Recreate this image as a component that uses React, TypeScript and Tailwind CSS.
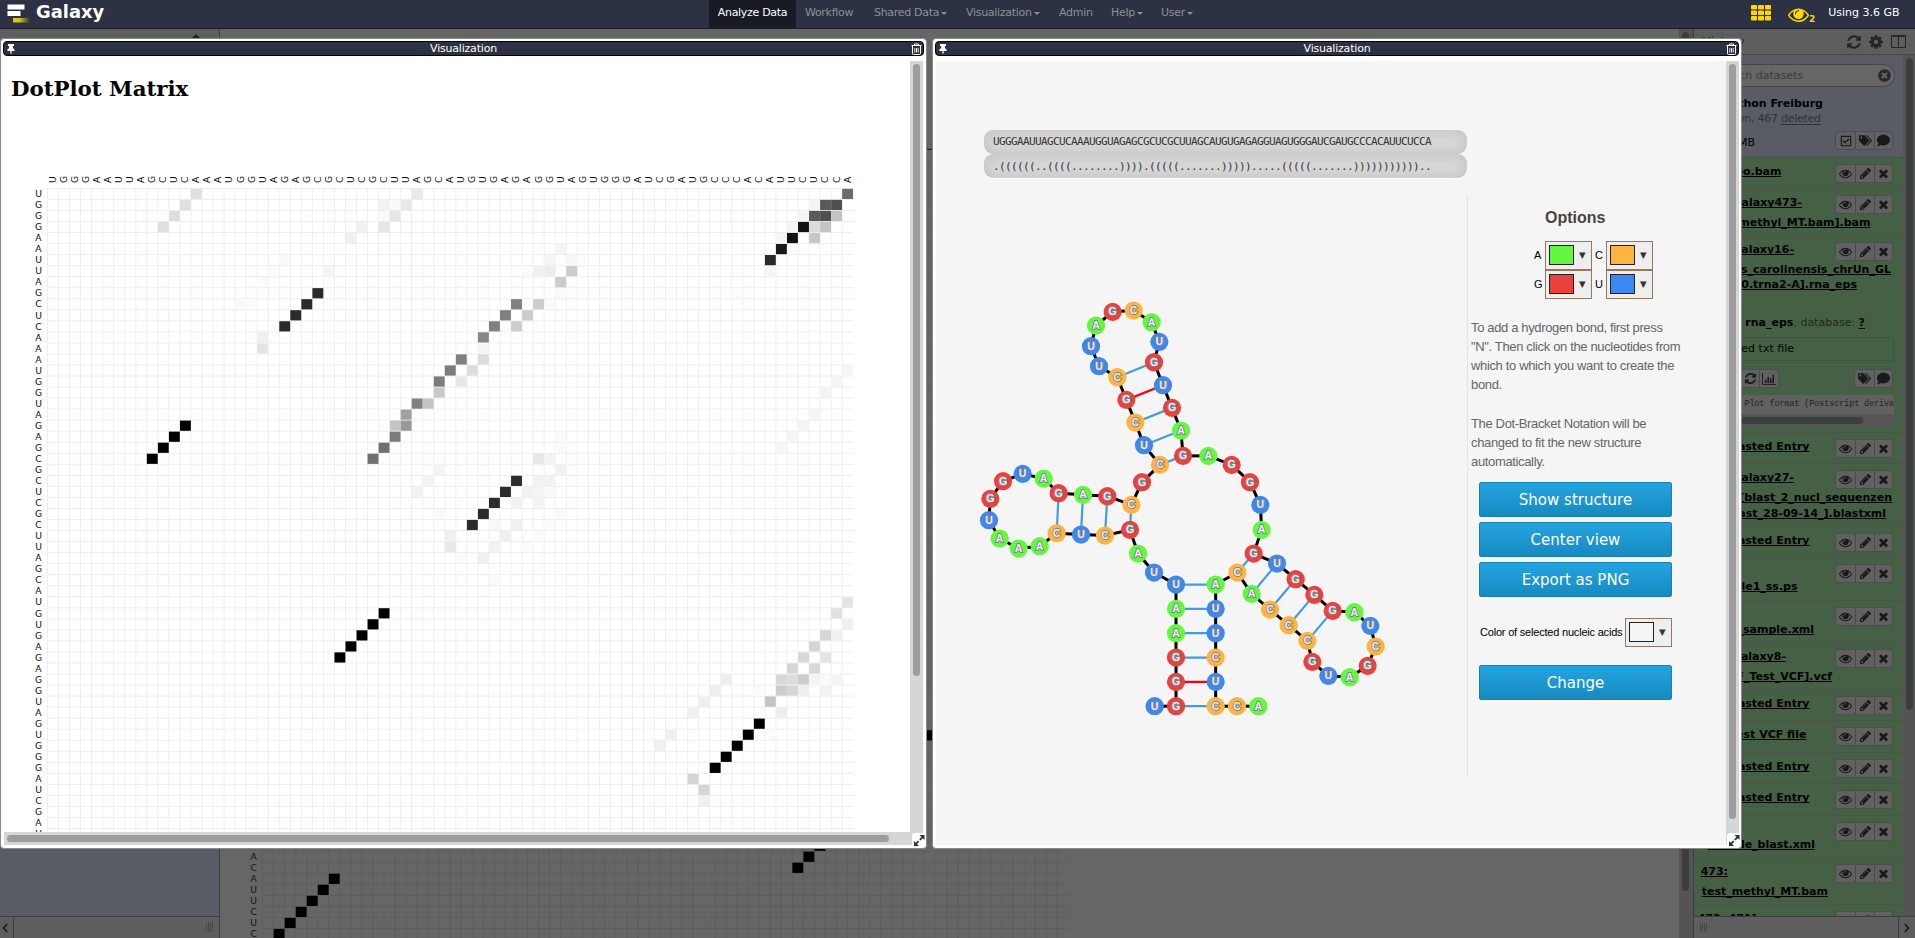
import React from "react";
import { FaTags, FaComment, FaRegCheckSquare, FaThumbtack, FaTimesCircle, FaChevronLeft, FaChevronRight } from "react-icons/fa";

const SEQ = "UGGGAAUUAGCUCAAAUGGUAGAGCGCUCGCUUAGCAUGUGAGAGGUAGUGGGAUCGAUGCCCACAUUCUCCA";
const DOTS = ".((((((..((((........)))).(((((.......))))).....(((((.......)))))))))))..";
const STEP = 11.037;

/* column, row, grey level */
const CELLS = `13 0 e0,33 0 ea,12 1 e0,30 1 f2,31 1 fa,32 1 e9,11 2 df,31 2 e6,30 2 fa,10 2 fc,10 3 df,30 3 e6,28 3 f1,27 4 f0,
21 6 fa,25 7 f5,20 7 fb,19 8 fb,24 9 2a,23 10 2a,17 10 fa,18 10 fb,22 11 2a,21 12 2a,19 13 f0,19 14 e4,39 13 86,37 15 80,36 16 7c,38 16 dc,
35 17 7c,37 17 e8,35 18 c8,33 19 80,34 19 c4,32 20 a0,31 21 c4,32 21 98,30 21 fc,12 21 00,31 22 7c,11 22 00,30 23 70,10 23 00,29 24 70,9 24 00,
35 25 f4,34 26 f3,33 27 f3,35 29 fa,39 29 2d,38 30 2d,36 31 f0,36 32 e8,37 33 fb,39 33 f0,
30 38 00,29 39 00,28 40 00,27 41 00,26 42 00,72 0 6c,69 1 f5,70 1 5a,71 1 50,68 2 f5,69 2 5a,70 2 50,71 2 c4,67 3 f5,68 3 12,69 3 dc,70 3 c4,
66 4 f5,67 4 12,69 4 c8,66 5 18,46 5 f4,67 5 fc,65 6 2a,45 6 f5,47 6 f8,48 6 fb,65 7 f5,44 7 f0,45 7 ed,47 7 cc,43 7 fb,46 8 cc,46 9 fb,62 9 fb,
42 10 80,44 10 cc,45 10 fa,41 11 80,43 11 cc,40 12 80,42 12 cc,39 14 f4,39 15 dc,72 16 f5,71 17 f4,70 18 f4,69 20 f5,68 21 f5,67 22 f6,66 23 f6,
46 22 fa,46 23 fa,44 24 e8,45 24 f2,46 25 f2,42 26 2d,44 26 f2,45 26 f2,41 27 2d,43 27 f2,44 27 f5,45 27 fa,40 28 2d,42 28 f3,44 28 f4,46 29 fa,
42 30 f0,40 30 f8,45 30 fb,41 31 f0,44 31 fc,40 32 f2,43 32 fb,40 35 fa,72 37 e4,71 38 e0,72 39 f0,70 40 d6,71 40 f0,69 41 d6,68 42 d8,70 42 e4,
67 43 d6,69 43 d8,61 44 ee,66 44 d8,67 44 dc,68 44 cc,69 44 f4,70 44 f9,71 44 f4,60 45 ee,66 45 cc,67 45 d6,68 45 ee,70 45 f2,64 45 fb,59 46 ee,65 46 c4,
58 47 f0,66 47 ee,64 48 00,56 49 f0,63 49 00,65 49 fb,55 50 f0,62 50 00,61 51 00,60 52 00,58 53 d6,59 54 d6,59 55 f0`
  .split(",")
  .map((s) => s.trim().split(" "))
  .map(([c, r, g]) => ({ c: +c, r: +r, fill: `#${g}${g}${g}` }));

const SHADOW_CELLS = [
  [60, 52], [50, 62], [49, 63], [48, 64], [6, 65], [5, 66], [4, 67], [3, 68], [2, 69], [1, 70],
].map(([c, r]) => ({ c, r, fill: "#000" }));

type Cell = { c: number; r: number; fill: string };

/* `rows` is how many row labels are drawn before the plot runs out of view. */
function DotPlot({ ox, oy, rows, cells, line, ink, viewBox, className }: {
  ox: number; oy: number; rows: number; cells: Cell[]; line: string; ink: string; viewBox: string; className: string;
}) {
  const end = STEP * 73;
  const idx = Array.from({ length: 73 }, (_, i) => i);
  return (
    <svg viewBox={viewBox} className={className}>
      <g stroke={line} strokeWidth="1">
        {idx.map((i) => (
          <g key={i}>
            <line x1={ox + i * STEP} x2={ox + i * STEP} y1={oy} y2={oy + end} />
            <line x1={ox} x2={ox + end} y1={oy + i * STEP} y2={oy + i * STEP} />
          </g>
        ))}
      </g>
      {cells.map((k, i) => (
        <rect key={i} x={ox + k.c * STEP} y={oy + k.r * STEP + 0.4} width={10.9} height={10.2} fill={k.fill} />
      ))}
      <g fill={ink} fontFamily="DejaVu Sans" fontSize="9.2">
        {idx.slice(0, rows).map((i) => (
          <text key={i} x={ox - 9} y={oy + i * STEP + 8.7} textAnchor="middle">{SEQ[i]}</text>
        ))}
        {idx.map((i) => (
          <text key={i} transform={`translate(${ox + i * STEP + 8.4} ${oy - 5.4}) rotate(-90)`}>{SEQ[i]}</text>
        ))}
      </g>
    </svg>
  );
}

const NODES = `554 1248,618 1248,618 1175,618 1102,618 1029,618 956,618 883,552 847,504 790,480 719,405 736,333 733,260 729,209 768,146 775,89 745,57 690,61 626,99 573,158 551,221 565,266 609,339 614,412 618,484 644,516 576,570 524,522 465,496 397,469 329,442 261,387 228,363 168,378 106,428 65,491 61,545 96,568 155,552 216,579 285,606 353,633 421,639 497,715 497,785 524,840 576,871 644,875 719,851 790,921 820,977 867,1033 914,1088 962,1153 966,1201 1007,1217 1069,1193 1127,1139 1161,1075 1157,1027 1115,1012 1052,956 1005,900 958,845 911,802 847,737 883,737 956,737 1029,737 1102,737 1175,737 1248,801 1248,865 1248`
  .split(",")
  .map((s) => s.split(" ").map(Number))
  .map(([x, y]) => [970 + x / 3, 290.2 + y / 3]);

const BONDS = [
  [2, 71], [3, 70], [4, 69], [5, 68], [6, 67], [7, 66], [10, 25], [11, 24], [12, 23], [13, 22],
  [27, 43], [28, 42], [29, 41], [30, 40], [31, 39], [49, 65], [50, 64], [51, 63], [52, 62], [53, 61],
];
const BASE: Record<string, string> = { A: "#64f73f", C: "#ffb340", G: "#eb413c", U: "#3c88ee" };

function Structure() {
  return (
    <svg viewBox="936 178 531 620" className="block h-[620px] w-[531px]">
      {BONDS.map(([a, b]) => {
        const p = NODES[a - 1];
        const q = NODES[b - 1];
        const wobble = (a === 3 && b === 70) || (a === 30 && b === 40);
        return <line key={a} x1={p[0]} y1={p[1]} x2={q[0]} y2={q[1]} stroke={wobble ? "#f8000c" : "#459cdb"} strokeWidth="2.2" />;
      })}
      {NODES.slice(1).map((q, i) => (
        <line key={i} x1={NODES[i][0]} y1={NODES[i][1]} x2={q[0]} y2={q[1]} stroke="#000" strokeWidth="3" />
      ))}
      {NODES.map(([x, y], i) => (
        <g key={i}>
          <circle cx={x} cy={y} r="9.1" fill={BASE[SEQ[i]]} />
          <text x={x} y={y + 3.3} textAnchor="middle" fontFamily="Liberation Sans" fontWeight="bold" fontSize="10.5" fill="#ececf2" stroke="#7d8290" strokeWidth="1.9" paintOrder="stroke">
            {SEQ[i]}
          </text>
        </g>
      ))}
    </svg>
  );
}

const P = {
  eye: "M1664 960q-152-236-381-353 61 104 61 225 0 185-131.5 316.5t-316.5 131.5-316.5-131.5-131.5-316.5q0-121 61-225-229 117-381 353 133 205 333.5 326.5t434.5 121.5 434.5-121.5 333.5-326.5zm-720-384q0-20-14-34t-34-14q-125 0-214.5 89.5t-89.5 214.5q0 20 14 34t34 14 34-14 14-34q0-86 61-147t147-61q20 0 34-14t14-34zm848 384q0 34-20 69-140 230-376.5 368.5t-499.5 138.5-499.5-139-376.5-368q-20-35-20-69t20-69q140-229 376.5-368t499.5-139 499.5 139 376.5 368q20 35 20 69z",
  pencil: "M491 1536l91-91-235-235-91 91v107h128v128h107zm523-928q0-22-22-22-10 0-17 7l-542 542q-7 7-7 17 0 22 22 22 10 0 17-7l542-542q7-7 7-17zm-54-192l416 416-832 832h-416v-416zm683 96q0 53-37 90l-166 166-416-416 166-165q36-38 90-38 53 0 91 38l235 234q37 39 37 91z",
  times: "M1490 1322q0 40-28 68l-136 136q-28 28-68 28t-68-28l-294-294-294 294q-28 28-68 28t-68-28l-136-136q-28-28-28-68t28-68l294-294-294-294q-28-28-28-68t28-68l136-136q28-28 68-28t68 28l294 294 294-294q28-28 68-28t68 28l136 136q28 28 28 68t-28 68l-294 294 294 294q28 28 28 68z",
  refresh: "M1639 1056q0 5-1 7-64 268-268 434.5t-478 166.5q-146 0-282.5-55t-243.5-157l-129 129q-19 19-45 19t-45-19-19-45v-448q0-26 19-45t45-19h448q26 0 45 19t19 45-19 45l-137 137q71 66 161 102t187 36q134 0 250-65t186-179q11-17 53-117 8-23 30-23h192q13 0 22.5 9.5t9.5 22.5zm25-800v448q0 26-19 45t-45 19h-448q-26 0-45-19t-19-45 19-45l138-138q-148-137-349-137-134 0-250 65t-186 179q-11 17-53 117-8 23-30 23h-199q-13 0-22.5-9.5t-9.5-22.5v-7q65-268 270-434.5t480-166.5q146 0 284 55.5t245 156.5l130-129q19-19 45-19t45 19 19 45z",
  cog: "M1152 896q0-106-75-181t-181-75-181 75-75 181 75 181 181 75 181-75 75-181zm512-109v222q0 12-8 23t-20 13l-185 28q-19 54-39 91 35 50 107 138 10 12 10 25t-9 23q-27 37-99 108t-94 71q-12 0-26-9l-138-108q-44 23-91 38-16 136-29 186-7 28-36 28h-222q-14 0-24.5-8.5t-11.5-21.5l-28-184q-49-16-90-37l-141 107q-10 9-25 9-14 0-25-11-126-114-165-168-7-10-7-23 0-12 8-23 15-21 51-66.5t54-70.5q-27-50-41-99l-183-27q-13-2-21-12.5t-8-23.5v-222q0-12 8-23t19-13l186-28q14-46 39-92-40-57-107-138-10-12-10-24 0-10 9-23 26-36 98.5-107.5t94.5-71.5q13 0 26 10l138 107q44-23 91-38 16-136 29-186 7-28 36-28h222q14 0 24.5 8.5t11.5 21.5l28 184q49 16 90 37l142-107q9-9 24-9 13 0 25 10 129 119 165 170 7 8 7 22 0 12-8 23-15 21-51 66.5t-54 70.5q26 50 41 98l183 28q13 2 21 12.5t8 23.5z",
};

function Icon({ d, className }: { d: string; className: string }) {
  return (
    <svg viewBox="0 0 1792 1792" className={className} fill="currentColor">
      <path d={d} />
    </svg>
  );
}

function Btn({ children, className = "w-[19px]" }: { children: React.ReactNode; className?: string }) {
  return <span className={`flex items-center justify-center border-l border-[#494b4b] first:border-l-0 ${className}`}>{children}</span>;
}

function Group({ children, className = "" }: { children: React.ReactNode; className?: string }) {
  return (
    <div className={`flex h-[19px] shrink-0 overflow-hidden rounded-[3px] border border-[#4b4e4d] bg-[#616161] text-[#191919] ${className}`}>{children}</div>
  );
}

function RowButtons() {
  return (
    <Group>
      <Btn><Icon d={P.eye} className="size-[13px]" /></Btn>
      <Btn><Icon d={P.pencil} className="size-[13px]" /></Btn>
      <Btn className="w-[18px]"><Icon d={P.times} className="size-[13px]" /></Btn>
    </Group>
  );
}

/* `right` is the distance from the panel's left edge to the end of the line; `gap` is the space above it. */
type Line = { t: string; right: number; gap?: number };

function Row({ h, lines, children }: { h: number; lines: Line[]; children?: React.ReactNode }) {
  return (
    <div className="relative shrink-0 overflow-hidden border-b border-[#4d524f] bg-[#466046]" style={{ height: h }}>
      <div className="flex flex-col pt-[6px] font-bold text-black">
        {lines.map((l, i) => (
          <div key={i} className="flex h-[15px] items-center justify-end whitespace-nowrap leading-[15px]" style={{ width: l.right - 1, marginTop: l.gap ?? 0 }}>
            <span className="underline decoration-1 underline-offset-[1px] [text-decoration-skip-ink:none]">{l.t}</span>
          </div>
        ))}
      </div>
      <div className="absolute right-[10px] top-[6px]"><RowButtons /></div>
      {children}
    </div>
  );
}

function HistoryPanel() {
  return (
    <div className="flex w-[222px] shrink-0 flex-col border-l border-[#3d3f42] text-[11px]">
      <div className="flex h-[26px] items-center justify-end border-b border-[#474747] bg-[#5e5e5e] pr-[9px] text-[#252525]">
        <span className="mr-auto pl-[8px] text-[12px]">History</span>
        <Icon d={P.refresh} className="mr-[6px] size-[16px]" />
        <Icon d={P.cog} className="mr-[7px] size-[16px]" />
        <svg viewBox="0 0 15 13" className="h-[13px] w-[15px]" fill="none" stroke="currentColor"><path d="M.5 1h14v11.5H.5zM7.5 1v11.5" /><path d="M.5 1h14" strokeWidth="1.6" /></svg>
      </div>
      <div className="flex h-[861px]">
        <div className="flex w-[210px] flex-col overflow-hidden">
          <div className="h-[102px] shrink-0 bg-[#595c64] pl-[6px] pt-[9px]">
            <div className="flex h-[23px] w-[195px] items-center justify-between rounded-full border border-[#444] bg-[#666] pl-[14px] pr-[3px] text-[#3c3c3c]">
              <span className="w-[88px] whitespace-nowrap pt-px text-right">search datasets</span>
              <FaTimesCircle className="size-[13px] text-[#2a2a2a]" />
            </div>
            <div className="mt-[9px] w-[123px] whitespace-nowrap text-right font-bold leading-[15px] text-black">Hackathon Freiburg</div>
            <div className="w-[114px] whitespace-nowrap text-right leading-[15px] tracking-[-0.25px] text-[#303238]">17 shown, 467 <span className="underline underline-offset-2">deleted</span></div>
            <div className="flex pt-[5px]">
              <div className="w-[55px] whitespace-nowrap pt-[4px] text-right leading-[15px] text-black">95.7 MB</div>
              <Group className="ml-auto mr-[10px]">
                <Btn><FaRegCheckSquare className="size-[12px]" /></Btn>
                <Btn><FaTags className="size-[13px]" /></Btn>
                <Btn className="w-[18px]"><FaComment className="size-[13px]" /></Btn>
              </Group>
            </div>
          </div>
          <div className="flex flex-col border-t border-[#4d524f]">
            <Row h={31} lines={[{ t: "482: foo.bam", right: 88.5 }]} />
            <Row h={47} lines={[{ t: "481: Galaxy473-", right: 109 }, { t: "[test_methyl_MT.bam].bam", right: 177.5, gap: 5 }]} />
            <Row h={197} lines={[{ t: "480: Galaxy16-", right: 101 }, { t: "[Anolis_carolinensis_chrUn_GL", right: 198, gap: 5 }, { t: "343590.trna2-A].rna_eps", right: 164 }]}>
              <div className="w-[171px] whitespace-nowrap pt-[23px] text-right leading-[16px] text-[#1d281d]">
                format: <b className="text-black">rna_eps</b>, database: <b className="text-black underline underline-offset-2">?</b>
              </div>
              <div className="ml-[7px] mt-[6px] flex h-[24px] w-[193px] items-center rounded-[2px] border border-[#3e553e] text-black">
                <span className="w-[92px] whitespace-nowrap text-right">uploaded txt file</span>
              </div>
              <div className="flex justify-between pl-[26px] pr-[10px] pt-[8px]">
                <Group>
                  <Btn>i</Btn>
                  <Btn><Icon d={P.refresh} className="size-[13px]" /></Btn>
                  <Btn><svg viewBox="0 0 15 13" className="h-[12px] w-[14px]" fill="none" stroke="currentColor"><path d="M.5 0v12.5H15" /><path d="M4 7v4M6.7 4v7M9.4 6v5M12.1 2v9" strokeWidth="1.7" /></svg></Btn>
                </Group>
                <Group>
                  <Btn><FaTags className="size-[13px]" /></Btn>
                  <Btn className="w-[18px]"><FaComment className="size-[13px]" /></Btn>
                </Group>
              </div>
              <div className="ml-[7px] mt-[7px] w-[193px] overflow-hidden rounded-[3px] bg-[#616161]">
                <div className="flex h-[19px] items-center justify-end whitespace-nowrap font-['Liberation_Mono'] text-[8.3px] text-[#222]">Dot Plot format (Postscript deriva</div>
                <div className="flex h-[13px] items-center bg-[#555]"><div className="ml-[3px] h-[7px] w-[159px] rounded-full bg-[#3d3f3e]" /></div>
              </div>
            </Row>
            <Row h={31} lines={[{ t: "479: Pasted Entry", right: 116.5 }]} />
            <Row h={63} lines={[{ t: "478: Galaxy27-", right: 101 }, { t: "[blast_2_nucl_sequenzen", right: 199, gap: 5 }, { t: "_blast_28-09-14_].blastxml", right: 193, gap: 1 }]} />
            <Row h={31} lines={[{ t: "477: Pasted Entry", right: 116.5 }]} />
            <Row h={43} lines={[{ t: "476:", right: 35 }, { t: "example1_ss.ps", right: 104.5 }]} />
            <Row h={42} lines={[{ t: "475:", right: 35 }, { t: "blast_sample.xml", right: 121 }]} />
            <Row h={47} lines={[{ t: "474: Galaxy8-", right: 93 }, { t: "[VCF_Test_VCF].vcf", right: 139, gap: 5 }]} />
            <Row h={31} lines={[{ t: "479: Pasted Entry", right: 116.5 }]} />
            <Row h={32} lines={[{ t: "478: Test VCF file", right: 113.5 }]} />
            <Row h={31} lines={[{ t: "476: Pasted Entry", right: 116.5 }]} />
            <Row h={32} lines={[{ t: "475: Pasted Entry", right: 116.5 }]} />
            <Row h={42} lines={[{ t: "474:", right: 35 }, { t: "sample_blast.xml", right: 122 }]} />
            <Row h={47} lines={[{ t: "473:", right: 35 }, { t: "test_methyl_MT.bam", right: 135, gap: 5 }]} />
            <Row h={40} lines={[{ t: "472, 471]:", right: 68 }]} />
          </div>
        </div>
        <div className="w-[12px] bg-[#545454] pt-[3px]"><div className="ml-[3px] h-[652px] w-[7px] rounded-full bg-[#3c3e3d]" /></div>
      </div>
      <div className="flex h-[22px] items-center border-t border-[#3f3f3f] bg-[#5e5e5e]">
        <Grip className="ml-[6px]" />
        <div className="ml-auto flex h-full w-[17px] items-center justify-center border-l border-[#3f3f3f]"><FaChevronRight className="size-[10px] text-[#1c1c1c]" /></div>
      </div>
    </div>
  );
}

function Grip({ className }: { className: string }) {
  return (
    <div className={`flex h-[9px] gap-px ${className}`}>
      <i className="w-px bg-[#484848]" /><i className="w-px bg-[#484848]" /><i className="w-px bg-[#484848]" /><i className="w-px bg-[#484848]" />
    </div>
  );
}

function Caret() {
  return <i className="ml-[2px] inline-block border-x-[3px] border-t-[3px] border-x-transparent border-t-current align-middle" />;
}

function Masthead() {
  return (
    <header className="flex h-[29px] shrink-0 border-b border-[#191b26] bg-[#2c3143] text-[11px] leading-[26px] text-[#8f9094]">
      <div className="flex w-[709px] pl-[7px]">
        <svg viewBox="0 0 24 20" className="mt-[4px] h-[20px] w-[24px]">
          <defs><linearGradient id="tail"><stop offset="0" stopColor="#e0c818" /><stop offset=".4" stopColor="#d2bd25" /><stop offset="1" stopColor="#2c3143" /></linearGradient></defs>
          <path d="M.5.5h17v5H.5zM.5 7h13v5H.5z" fill="#fff" />
          <path d="M6 14h17v4.500H6z" fill="url(#tail)" />
        </svg>
        <span className="ml-[5px] text-[17.900px] font-bold leading-[24px] text-white">Galaxy</span>
      </div>
      <nav className="flex w-[1042px] tracking-[-0.3px]">
        <span className="w-[87px] bg-[#191b24] text-center text-white">Analyze Data</span>
        <span className="w-[69px] pl-[9px]">Workflow</span>
        <span className="w-[92px] pl-[9px]">Shared Data<Caret /></span>
        <span className="w-[93px] pl-[9px]">Visualization<Caret /></span>
        <span className="w-[52px] pl-[9px]">Admin</span>
        <span className="w-[50px] pl-[9px]">Help<Caret /></span>
        <span className="pl-[9px]">User<Caret /></span>
      </nav>
      <svg viewBox="0 0 20 16" className="mt-[5px] h-[16px] w-[20px]" fill="#ffd700">
        {[0, 5.5, 11].map((y) => [0, 7, 14].map((x) => <rect key={`${x}-${y}`} x={x} y={y} width="6" height="4.600" rx="0.8" />))}
      </svg>
      <Icon d={P.eye} className="ml-[17px] mt-[4px] size-[21px] text-[#ffd700]" />
      <span className="pt-[6px] text-[9px] font-bold text-[#ffd700]">2</span>
      <span className="ml-[13px] whitespace-nowrap text-white">Using 3.6 GB</span>
    </header>
  );
}

function TitleBar() {
  return (
    <div className="mx-[1px] mt-[1px] flex h-[15px] shrink-0 items-center rounded-[4px] border border-black bg-[#2c3143] text-[11px] text-white">
      <FaThumbtack className="ml-[2px] size-[10px]" />
      <span className="flex-1 pt-px text-center leading-[14px] tracking-[-0.2px]">Visualization</span>
      <svg viewBox="0 0 11 12" className="mr-[1px] h-[12px] w-[11px]" fill="none" stroke="#fff"><path d="M1.500 3v7.500q0 1 1 1h6q1 0 1-1V3M.5 2.500h10M3.500 2.500v-1.500h4v1.500" /><path d="M3.800 5v4.500M5.500 5v4.500M7.200 5v4.500" strokeWidth=".9" /></svg>
    </div>
  );
}

function Resize() {
  return (
    <div className="absolute bottom-[1px] right-0 size-[14px] rounded-[3px] bg-white">
      <svg viewBox="0 0 14 14" className="size-[14px]" fill="#2c3143"><path d="M7.500 2h5v5l-1.700-1.700-2.300 2.300-1.300-1.300 2.300-2.300zM7 13H2V8l1.700 1.700L6 7.400l1.300 1.300L5 11z" /></svg>
    </div>
  );
}

function Picker({ color, className = "" }: { color: string; className?: string }) {
  return (
    <div className={`flex h-[29px] w-[47px] items-center border border-[#93785f] bg-[#eee] pb-px pl-[3px] ${className}`}>
      <i className="h-[20px] w-[25px] border border-[#222]" style={{ backgroundColor: color }} />
      <span className="ml-[5px] font-['DejaVu_Sans'] text-[8.500px] text-[#333]">▼</span>
    </div>
  );
}

function BlueButton({ label, className = "" }: { label: string; className?: string }) {
  return (
    <button className={`block h-[35px] w-[193px] rounded-[2px] border border-[#1a81b4] bg-linear-to-b from-[#24a4e2] to-[#178abf] font-['DejaVu_Sans'] text-[15px] leading-[32px] text-white ${className}`}>{label}</button>
  );
}

function SequenceBox({ text, className }: { text: string; className: string }) {
  return (
    <div className={`h-[24px] w-[483px] overflow-hidden whitespace-pre rounded-[9px] bg-[#d8d8d8] pl-[9px] font-['DejaVu_Sans_Mono'] text-[11px] tracking-[-0.623px] text-[#333] shadow-[inset_0_0_14px_rgba(0,0,0,0.12),0_1px_0_#fff] ${className}`}>
      {text}
    </div>
  );
}

export default function App() {
  return (
    <div className="relative flex h-[938px] w-[1915px] flex-col overflow-hidden bg-[#666] font-['DejaVu_Sans',sans-serif]">
      <Masthead />
      <div className="flex min-h-0 flex-1">
        <aside className="flex w-[220px] shrink-0 flex-col border-r border-[#3d3f42]">
          <div className="flex h-[26px] justify-center bg-[#5e5e5e] pl-[173px]">
            <i className="mt-[5px] h-[4px] w-[8px] border-x-4 border-b-4 border-x-transparent border-b-[#222]" />
          </div>
          <div className="flex-1 bg-[#595c64]" />
          <div className="flex h-[22px] items-center border-t border-[#3f3f3f] bg-[#5e5e5e]">
            <div className="flex h-full w-[14px] items-center border-r border-[#3f3f3f]"><FaChevronLeft className="size-[10px] text-[#1c1c1c]" /></div>
            <Grip className="ml-auto mr-[6px]" />
          </div>
        </aside>
        <main className="flex min-w-0 flex-1">
          <DotPlot ox={262.6} oy={155.9} rows={71} cells={SHADOW_CELLS} line="#5f5f5f" ink="#141414" viewBox="220 29 1459 909" className="block h-[909px] w-[1459px]" />
          <div className="w-[14px] bg-[#545454]"><div className="ml-[3px] mt-[3px] h-[859px] w-[7px] rounded-full bg-[#3c3e3d]" /></div>
        </main>
        <HistoryPanel />
      </div>

      <section className="absolute left-0 top-[38px] flex h-[811px] w-[927px] flex-col rounded-[4px] border border-[#8a8a8a] bg-white px-px pt-px">
        <TitleBar />
        <div className="ml-[2px] mt-[5px] flex h-[771px]">
          <div className="w-[906px] shrink-0 overflow-hidden">
            <h1 className="h-[90px] pl-[7px] pt-[15px] font-['DejaVu_Serif'] text-[21.300px] font-bold leading-[26px] text-black">DotPlot Matrix</h1>
            <DotPlot ox={47.5} oy={188.4} rows={59} cells={CELLS} line="#eeeeee" ink="#111" viewBox="4 151 906 681" className="block h-[681px] w-[906px]" />
          </div>
          <div className="w-[13px] shrink-0 bg-[#d6d6d6] pt-[3px]"><div className="ml-[3px] h-[612px] w-[7px] rounded-full bg-[#9c9d9d]" /></div>
        </div>
        <div className="ml-[2px] flex h-[13px] w-[919px] items-center bg-[#d6d6d6]"><div className="ml-[3px] h-[7px] w-[882px] rounded-full bg-[#9c9d9d]" /></div>
        <Resize />
      </section>

      <section className="absolute left-[932px] top-[38px] flex h-[811px] w-[810px] flex-col rounded-[4px] border border-[#8a8a8a] bg-white px-px pt-px">
        <TitleBar />
        <div className="ml-[2px] mt-[5px] flex h-[784px]">
          <div className="flex w-[790px] shrink-0 overflow-hidden bg-[#f5f5f5]">
            <div className="w-[531px] shrink-0 pt-[69px]">
              <div className="pl-[48px]">
                <SequenceBox text={SEQ} className="leading-[23px]" />
                <SequenceBox text={DOTS} className="leading-[25px]" />
              </div>
              <Structure />
            </div>
            <div className="mt-[134px] h-[581px] w-[240px] border-l border-[#e2e2e2] font-['Liberation_Sans'] text-[11px] text-black">
              <h2 className="pl-[77px] pt-[13px] text-[16px] font-bold leading-[20px] text-[#4a443f]">Options</h2>
              <div className="mt-[13px] grid w-max grid-cols-[11px_47px_14px_47px] items-center pl-[66px]">
                <span>A</span><Picker color="#64f73f" /><span className="pl-[3px]">C</span><Picker color="#ffb340" />
                <span>G</span><Picker color="#eb413c" /><span className="pl-[3px]">U</span><Picker color="#3c88ee" />
              </div>
              <div className="w-[225px] whitespace-nowrap pl-[3px] pt-[19px] text-[13px] leading-[19px] tracking-[-0.350px] text-[#666]">
                <p>To add a hydrogen bond, first press<br />"N". Then click on the nucleotides from<br />which to which you want to create the<br />bond.</p>
                <p className="mt-[20px]">The Dot-Bracket Notation will be<br />changed to fit the new structure<br />automatically.</p>
              </div>
              <div className="flex flex-col gap-[5px] pl-[11px] pt-[11px]">
                <BlueButton label="Show structure" />
                <BlueButton label="Center view" />
                <BlueButton label="Export as PNG" />
              </div>
              <div className="flex items-center pl-[11px] pt-[21px]">
                <span className="w-[146px] whitespace-nowrap pl-[1px] tracking-[-0.2px]">Color of selected nucleic acids</span>
                <Picker color="#f5f5f5" />
              </div>
              <BlueButton label="Change" className="ml-[11px] mt-[18px]" />
            </div>
          </div>
          <div className="w-[13px] shrink-0 bg-[#d6d6d6] pt-[3px]"><div className="ml-[3px] h-[755px] w-[7px] rounded-full bg-[#9c9d9d]" /></div>
        </div>
        <Resize />
      </section>
    </div>
  );
}
